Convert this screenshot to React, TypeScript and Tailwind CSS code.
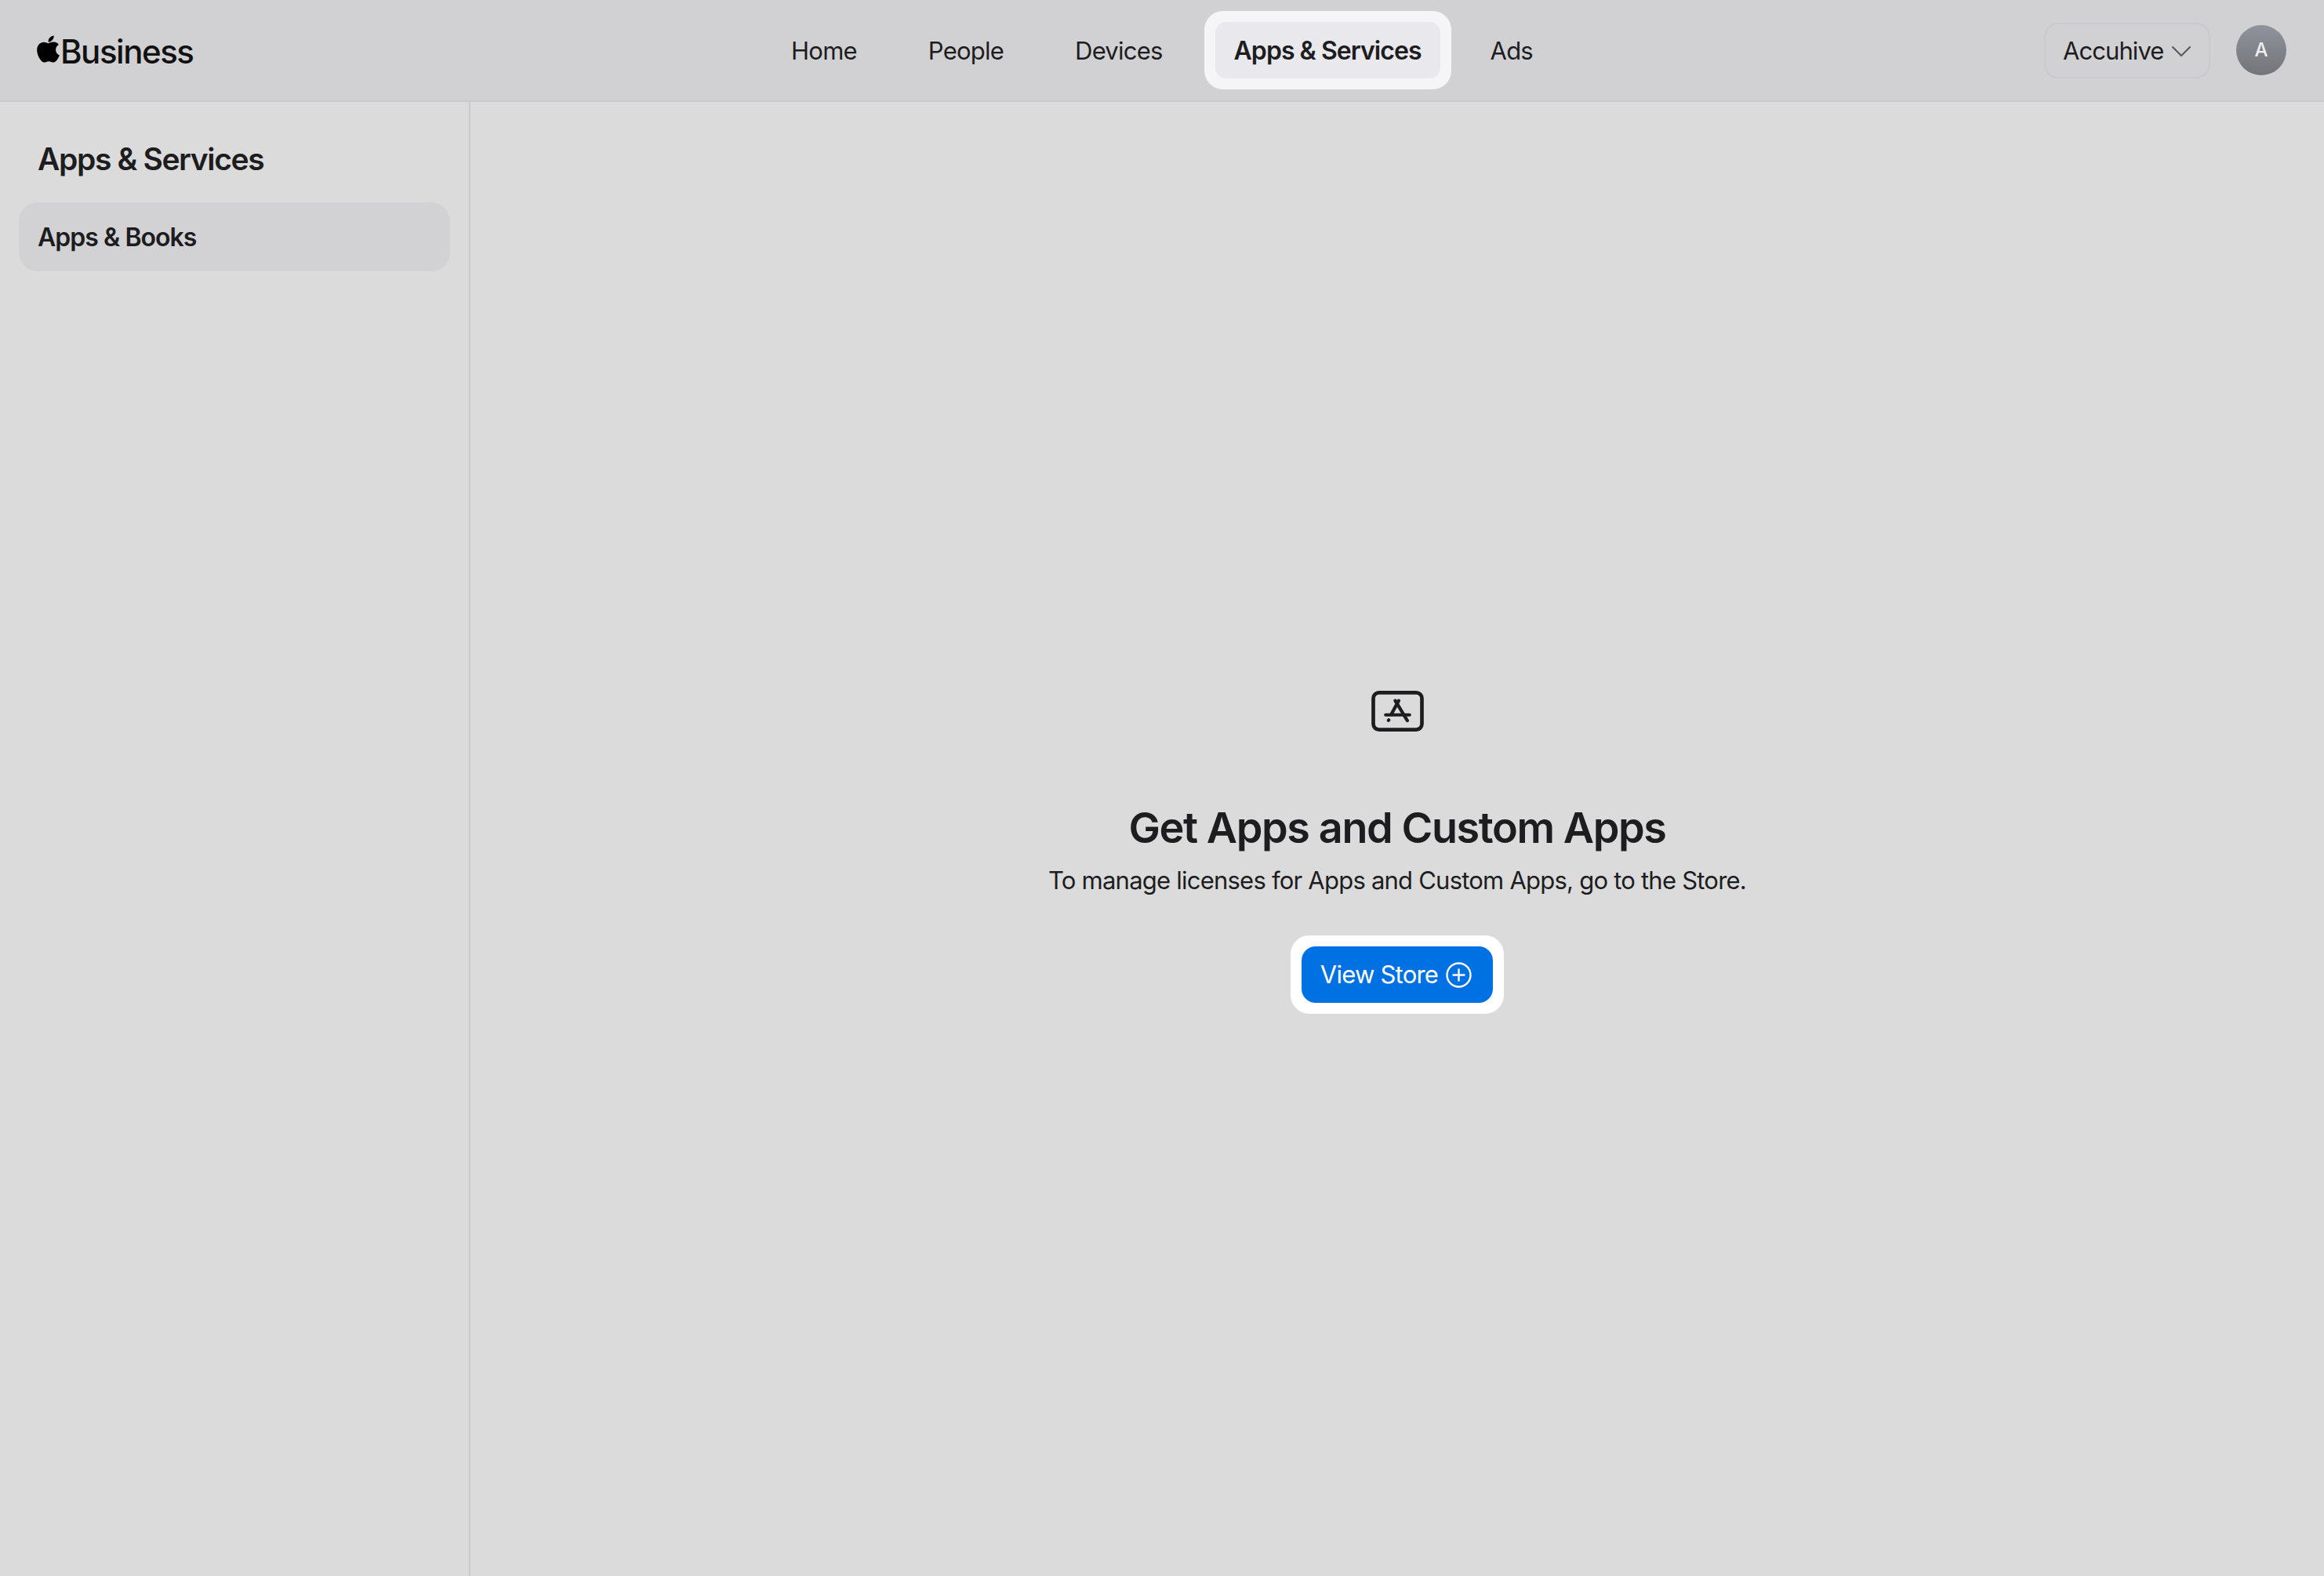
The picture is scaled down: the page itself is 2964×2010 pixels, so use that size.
import { FaApple } from "react-icons/fa";

const navItems = ["Home", "People", "Devices", "Apps & Services", "Ads"];

function AppStoreIcon() {
  return (
    <svg width="67" height="52" viewBox="0 0 200 156" fill="none" stroke="#1d1d1f" strokeLinecap="round">
      <rect x="7" y="7" width="186" height="142" rx="22" strokeWidth="14" />
      <path d="M54 92H146" strokeWidth="12" />
      <path d="M104 38L76 90" strokeWidth="13" />
      <path d="M66 112L65 113" strokeWidth="13" />
      <path d="M91 38L137 114" strokeWidth="13" />
    </svg>
  );
}

function PlusCircle() {
  return (
    <svg width="33" height="33" viewBox="0 0 33 33" fill="none" stroke="#fff" strokeWidth="2.4" strokeLinecap="round">
      <circle cx="16.5" cy="16.5" r="15" />
      <path d="M16.5 9.5V23.5M9.5 16.5H23.5" />
    </svg>
  );
}

function Chevron() {
  return (
    <svg width="26" height="15" viewBox="0 0 26 15" fill="none" stroke="#5c5c60" strokeWidth="2.2" strokeLinecap="round" strokeLinejoin="round">
      <path d="M2 2L13 13L24 2" />
    </svg>
  );
}

export default function App() {
  return (
    <div className="flex h-screen flex-col overflow-hidden bg-[#dbdbdb] font-['Inter',sans-serif] text-[#1d1d1f]">
      {/* Top bar */}
      <header className="grid h-[130px] shrink-0 grid-cols-[1fr_auto_1fr] items-center border-b-2 border-[#c9c9ce] bg-[#d1d1d3] px-[47px]">
        <div className="flex items-center">
          <FaApple className="-ml-[5px] mb-[4px] text-[39px] text-black" />
          <span className="-ml-[4px] pt-[2px] text-[42px] font-medium tracking-[-0.035em] text-[#111]">Business</span>
        </div>

        <nav className="flex items-center gap-[43px]">
          {navItems.map((item) =>
            item === "Apps & Services" ? (
              <div key={item} className="-my-[14px] -ml-[14px] -mr-[17px] rounded-[24px] bg-[#f5f5f7] p-[14px]">
                <a className="flex h-[72px] items-center rounded-[14px] bg-[#e8e8ed] px-[24px] pt-[2px] text-[32px] font-semibold tracking-[-0.03em]">
                  {item}
                </a>
              </div>
            ) : (
              <a key={item} className="flex h-[72px] items-center px-[24px] pt-[2px] text-[31px] tracking-[-0.025em]">
                {item}
              </a>
            ),
          )}
        </nav>

        <div className="flex items-center justify-end gap-[33px] pr-[1px]">
          <button className="flex h-[71px] w-[212px] items-center gap-[10px] rounded-[18px] border-2 border-[#c9c9ce] pl-[22px] pt-[2px] text-[31px] tracking-[-0.03em]">
            Accuhive
            <Chevron />
          </button>
          <div className="flex h-[64px] w-[64px] items-center justify-center rounded-full bg-gradient-to-b from-[#90939d] to-[#737579] text-[24px] font-medium text-[#f0f0f2]">
            A
          </div>
        </div>
      </header>

      <div className="flex min-h-0 flex-1">
        {/* Sidebar */}
        <aside className="w-[600px] shrink-0 border-r-2 border-[#c9c9cb] px-[24px]">
          <h2 className="mt-[51px] pl-[24px] text-[39px] leading-[44px] font-semibold tracking-[-0.035em]">Apps &amp; Services</h2>
          <div className="mt-[33px] flex h-[88px] w-[550px] items-center rounded-[24px] bg-[#d2d2d4] pl-[24px] pt-[2px] text-[32px] font-semibold tracking-[-0.03em]">
            Apps &amp; Books
          </div>
        </aside>

        {/* Empty state */}
        <main className="flex flex-1 flex-col items-center justify-center pt-[33px]">
          <AppStoreIcon />
          <h1 className="mt-[91px] text-[54px] leading-[64px] font-semibold tracking-[-0.026em]">Get Apps and Custom Apps</h1>
          <p className="mt-[15px] text-[31px] leading-[40px] tracking-[-0.025em]">
            To manage licenses for Apps and Custom Apps, go to the Store.
          </p>
          <div className="mt-[50px] rounded-[24px] bg-white p-[14px]">
            <button className="flex h-[72px] w-[244px] items-center justify-center gap-[10px] rounded-[18px] bg-[#0071e3] pt-[1px] pr-[3px] text-[31px] tracking-[-0.025em] text-white">
              View Store
              <PlusCircle />
            </button>
          </div>
        </main>
      </div>
    </div>
  );
}
